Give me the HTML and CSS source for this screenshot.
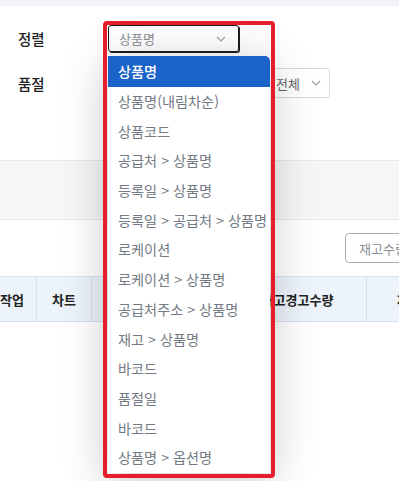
FILE: index.html
```html
<!DOCTYPE html>
<html lang="ko">
<head>
<meta charset="UTF-8">
<meta name="viewport" content="width=device-width, initial-scale=1.0">
<title>재고 관리</title>
<link rel="stylesheet" href="styles.css">
</head>
<body>
<div class="page">
  <div class="topbar"></div>

  <div class="filters">
    <div class="filter-row">
      <span class="filter-label">정렬</span>
      <div class="sort-field">
        <div class="select select-focused">
          <span>상품명</span>
          <svg class="chevron" width="10" height="6" viewBox="0 0 10 6"><path d="M1 1l4 4 4-4" fill="none" stroke="#9aa0a8" stroke-width="1.2"/></svg>
        </div>
        <ul class="dropdown">
          <li class="dropdown-item active">상품명</li>
          <li class="dropdown-item">상품명(내림차순)</li>
          <li class="dropdown-item">상품코드</li>
          <li class="dropdown-item">공급처 &gt; 상품명</li>
          <li class="dropdown-item">등록일 &gt; 상품명</li>
          <li class="dropdown-item">등록일 &gt; 공급처 &gt; 상품명</li>
          <li class="dropdown-item">로케이션</li>
          <li class="dropdown-item">로케이션 &gt; 상품명</li>
          <li class="dropdown-item">공급처주소 &gt; 상품명</li>
          <li class="dropdown-item">재고 &gt; 상품명</li>
          <li class="dropdown-item">바코드</li>
          <li class="dropdown-item">품절일</li>
          <li class="dropdown-item">바코드</li>
          <li class="dropdown-item">상품명 &gt; 옵션명</li>
        </ul>
        <div class="highlight-box"></div>
      </div>
    </div>
    <div class="filter-row filter-row-2">
      <span class="filter-label">품절</span>
      <div class="select select-wide"><span>전체</span></div>
      <div class="select select-small">
        <span>전체</span>
        <svg class="chevron" width="10" height="6" viewBox="0 0 10 6"><path d="M1 1l4 4 4-4" fill="none" stroke="#9aa0a8" stroke-width="1.2"/></svg>
      </div>
    </div>
  </div>

  <div class="divider"></div>

  <div class="toolbar">
    <button class="tool-button">재고수량 수정</button>
  </div>

  <div class="table-head">
    <div class="th th-work">작업</div>
    <div class="th th-chart">차트</div>
    <div class="th th-name">상품명</div>
    <div class="th th-warn">재고경고수량</div>
    <div class="th th-stock">재고</div>
  </div>
  <div class="table-body"></div>
</div>
</body>
</html>
```

FILE: styles.css
```css
html, body {
  overflow: hidden;
}
body {
  margin: 0;
  background-color: #ffffff;
  font-family: "Noto Sans CJK KR", "Noto Sans", sans-serif;
}
.page {
  width: 460px;
  min-height: 481px;
}
.topbar {
  height: 6px;
  background-color: #f1f3f6;
}
.filters {
  height: 135px;
  padding: 19px 0 0 18px;
  display: flex;
  flex-direction: column;
  gap: 16px;
}
.filter-row {
  display: flex;
  align-items: center;
  height: 27px;
}
.filter-row-2 {
  height: 30px;
  gap: 8px;
}
.filter-label {
  width: 90px;
  font-size: 14.5px;
  font-weight: 500;
  color: #222;
}
.filter-row-2 .filter-label {
  width: 82px;
}
.sort-field {
  position: relative;
}
.select {
  box-sizing: border-box;
  display: flex;
  align-items: center;
  justify-content: space-between;
  height: 100%;
  padding: 0 12px 0 10px;
  border: 1px solid #d6dbe1;
  border-radius: 3px;
  font-size: 13px;
  color: #666;
}
.select-focused {
  width: 131px;
  height: 27px;
  border-color: #1c1c1c;
  box-shadow: 1px 1px 0 #1c1c1c;
  color: #8a8f96;
}
.select-wide {
  width: 150px;
}
.select-small {
  width: 64px;
  padding: 0 8px 0 9px;
}
.chevron {
  display: block;
}
.dropdown {
  position: absolute;
  top: 31px;
  left: 0;
  width: 162px;
  margin: 0;
  padding: 0;
  list-style: none;
  background-color: #ffffff;
  box-shadow: 0 8px 44px rgba(0, 0, 0, 0.24);
  z-index: 2;
}
.dropdown-item {
  height: 29.7px;
  line-height: 29.7px;
  padding-left: 10px;
  font-size: 14.2px;
  color: #737a84;
  white-space: nowrap;
}
.dropdown-item.active {
  height: 31px;
  line-height: 31px;
  background-color: #1b63c8;
  color: #ffffff;
  font-weight: 500;
  border-top-right-radius: 5px;
}
.highlight-box {
  position: absolute;
  top: -4px;
  left: -5px;
  width: 172px;
  height: 457px;
  box-sizing: border-box;
  border: 4px solid #e61e2b;
  border-radius: 4px;
  z-index: 3;
}
.divider {
  box-sizing: border-box;
  height: 60px;
  background-color: #f5f6f8;
  border-top: 1px solid #e4e7eb;
  border-bottom: 1px solid #e4e7eb;
}
.toolbar {
  display: flex;
  justify-content: flex-end;
  padding: 13px 15px 13px 0;
}
.tool-button {
  width: 100px;
  height: 30px;
  padding: 0 0 0 13px;
  text-align: left;
  background-color: #ffffff;
  border: 1px solid #a9adb3;
  border-radius: 4px;
  font-family: inherit;
  font-size: 13px;
  color: #8a8f96;
  white-space: nowrap;
}
.table-head {
  display: flex;
  height: 46px;
  box-sizing: border-box;
  background-color: #edf3fb;
  border-top: 1px solid #d8e2ee;
  border-bottom: 1px solid #d8e2ee;
}
.th {
  display: flex;
  align-items: center;
  justify-content: center;
  border-right: 1px solid #d8e2ee;
  font-size: 13px;
  font-weight: 700;
  color: #222;
  white-space: nowrap;
}
.th-work {
  width: 36px;
  justify-content: flex-start;
}
.th-chart {
  width: 54px;
}
.th-name {
  width: 136px;
}
.th-warn {
  width: 137px;
}
.th-stock {
  width: 84px;
  border-right: none;
}
.table-body {
  height: 160px;
}
```
